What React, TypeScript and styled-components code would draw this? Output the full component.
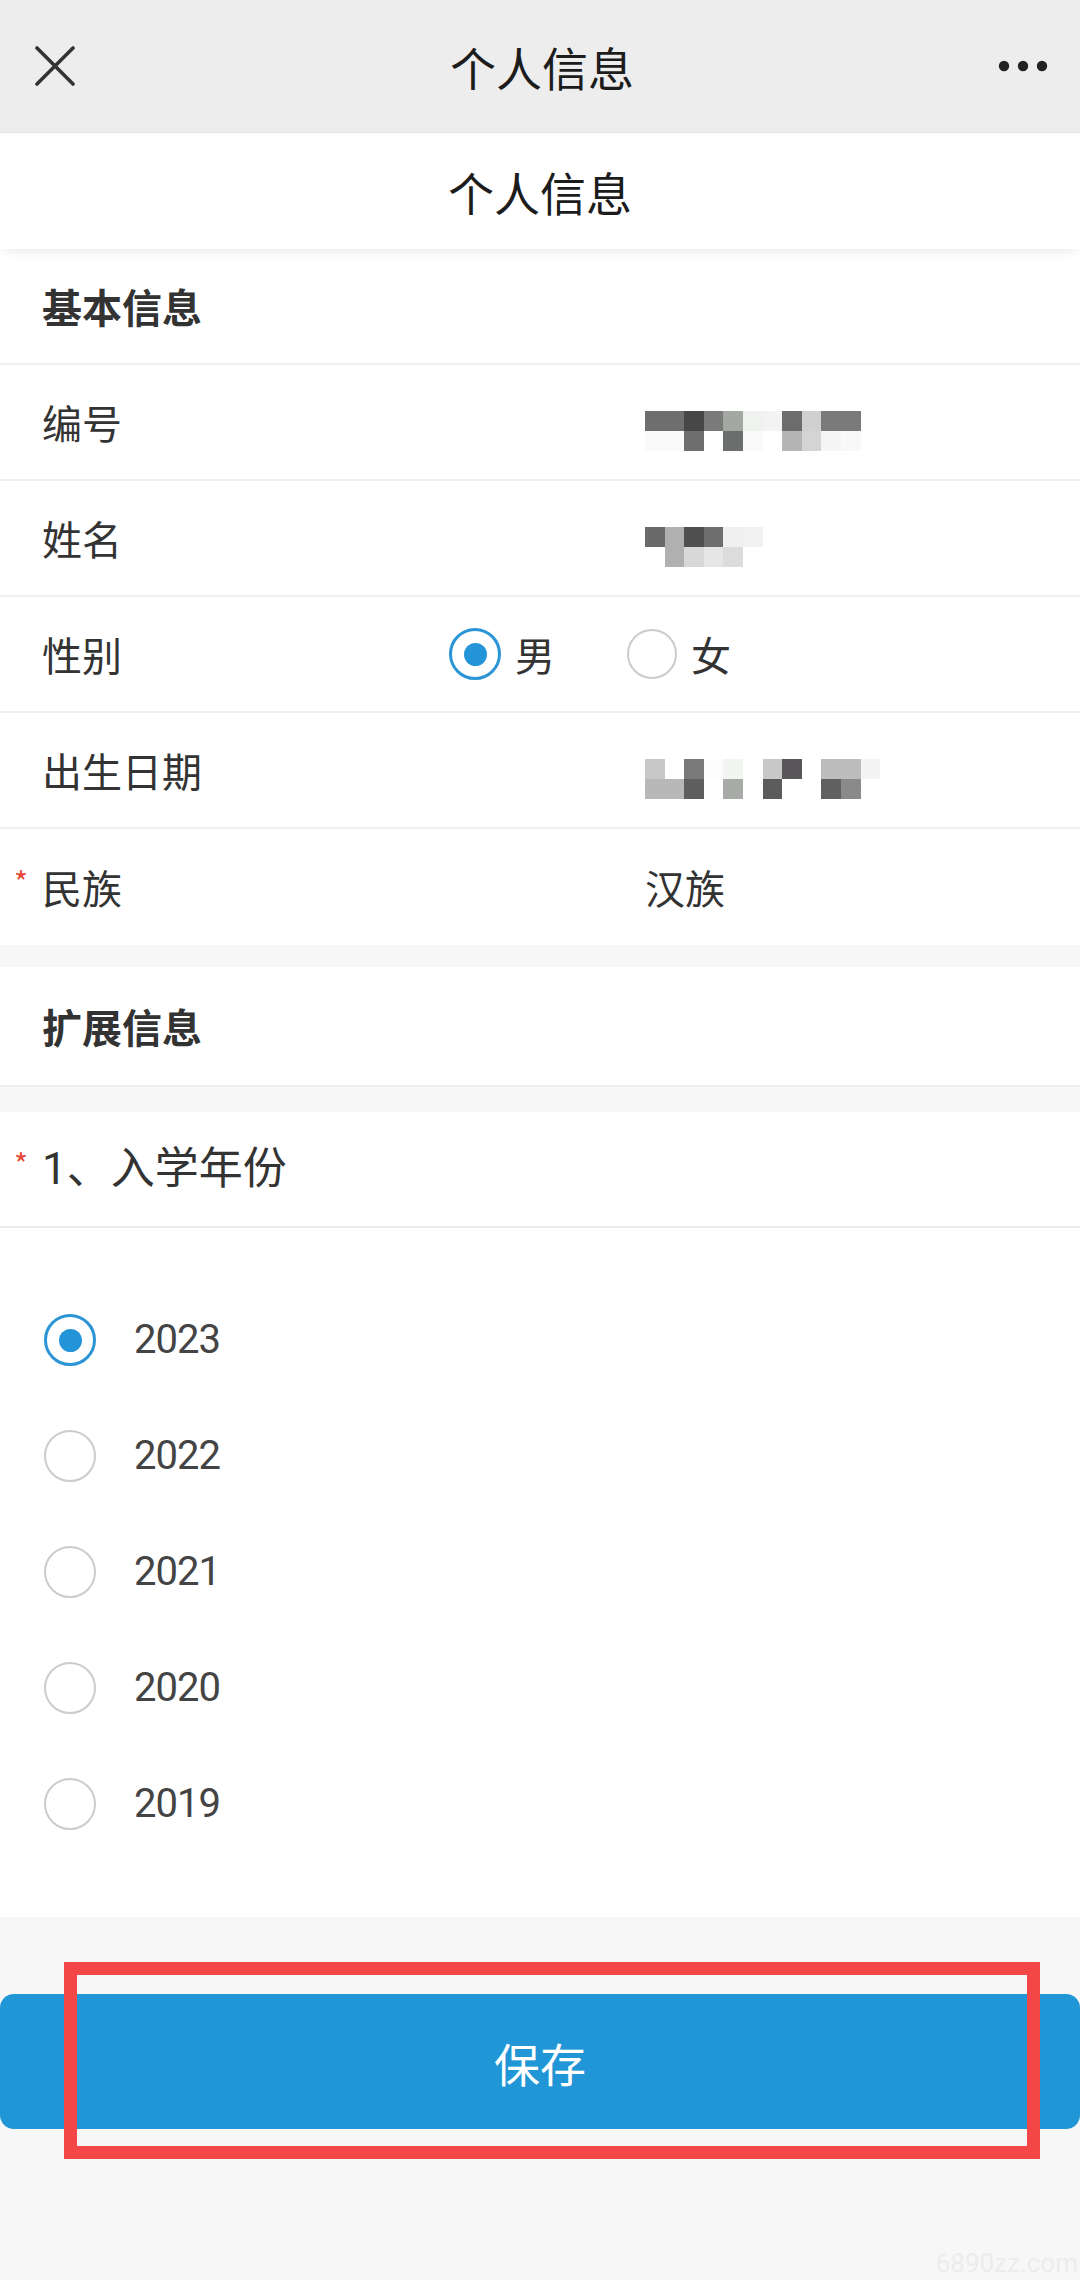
import React from "react";
import styled, { createGlobalStyle } from "styled-components";

const GlobalStyle = createGlobalStyle`
  html, body { margin: 0; padding: 0; background: #f7f7f7; }
  body { font-family: "Noto Sans CJK SC", "Noto Sans", sans-serif; }
  * { box-sizing: border-box; }
`;

const Page = styled.div`
  width: 1080px;
  height: 2280px;
  display: flex;
  flex-direction: column;
  background: #f7f7f7;
  overflow: hidden;
  position: relative;
`;

const NavBar = styled.div`
  height: 133px;
  flex-shrink: 0;
  background: #ededed;
  border-bottom: 1px solid #e2e2e2;
  display: grid;
  grid-template-columns: 1fr auto 1fr;
  align-items: center;
  padding: 0 31px 0 35px;
`;

const NavTitle = styled.div`
  font-size: 46px;
  font-weight: 400;
  color: #1c1c1c;
  line-height: 1;
`;

const NavIcon = styled.div<{ $end?: boolean }>`
  display: flex;
  justify-content: ${(p) => (p.$end ? "flex-end" : "flex-start")};
  align-items: center;
`;

const PageHeader = styled.div`
  height: 116px;
  flex-shrink: 0;
  background: #ffffff;
  display: flex;
  align-items: center;
  justify-content: center;
  font-size: 46px;
  font-weight: 400;
  color: #1c1c1c;
  position: relative;
  z-index: 1;
  box-shadow: 0 6px 10px -3px rgba(0, 0, 0, 0.08);
`;

const Card = styled.div<{ $gap?: number }>`
  background: #ffffff;
  flex-shrink: 0;
  margin-top: ${(p) => p.$gap ?? 0}px;
`;

const SectionHeader = styled.div<{ $h: number }>`
  height: ${(p) => p.$h}px;
  display: flex;
  align-items: center;
  padding-left: 42px;
  font-size: 40px;
  font-weight: 700;
  color: #333333;
  border-bottom: 2px solid #eeeeee;
`;

const Row = styled.div`
  height: 116px;
  display: flex;
  align-items: center;
  padding-left: 14px;
  border-bottom: 2px solid #f0f0f0;
  &:last-child {
    border-bottom: none;
  }
`;

const RequiredMark = styled.span<{ $show?: boolean }>`
  width: 28px;
  flex-shrink: 0;
  color: #e5493a;
  font-size: 30px;
  line-height: 1;
  align-self: center;
  margin-top: -12px;
  visibility: ${(p) => (p.$show ? "visible" : "hidden")};
`;

const Label = styled.div<{ $w: number }>`
  width: ${(p) => p.$w}px;
  flex-shrink: 0;
  font-size: 40px;
  color: #333333;
  line-height: 1;
`;

const Value = styled.div`
  font-size: 40px;
  color: #333333;
  line-height: 1;
`;

const Mosaic = styled.div<{ $cols: number }>`
  display: grid;
  grid-template-columns: repeat(${(p) => p.$cols}, 19.6px);
  grid-auto-rows: 19.6px;
  margin-top: 18px;
`;

const Cell = styled.span<{ $c: string }>`
  background: ${(p) => p.$c};
`;

const RadioGroup = styled.div`
  display: flex;
  align-items: center;
  gap: 72px;
`;

const RadioItem = styled.label`
  display: flex;
  align-items: center;
  gap: 14px;
  font-size: 40px;
  color: #333333;
  line-height: 1;
`;

const RadioCircle = styled.span<{ $checked?: boolean; $size: number }>`
  width: ${(p) => p.$size}px;
  height: ${(p) => p.$size}px;
  border-radius: 50%;
  flex-shrink: 0;
  border: ${(p) => (p.$checked ? "3px solid #2c95d6" : "2.5px solid #cccccc")};
  display: flex;
  align-items: center;
  justify-content: center;
  background: #ffffff;
`;

const RadioDot = styled.span`
  width: 23px;
  height: 23px;
  border-radius: 50%;
  background: #2494d8;
`;

const Question = styled.div`
  height: 116px;
  display: flex;
  align-items: center;
  padding-left: 14px;
  border-bottom: 2px solid #ebebeb;
`;

const QuestionText = styled.div`
  font-family: "Roboto", "Noto Sans CJK SC", sans-serif;
  font-size: 44px;
  color: #333333;
  line-height: 1;
`;

const OptionList = styled.div`
  padding: 54px 0 55px;
  display: flex;
  flex-direction: column;
`;

const OptionRow = styled.div`
  height: 116px;
  display: flex;
  align-items: center;
  gap: 38px;
  padding-left: 44px;
`;

const OptionText = styled.span`
  font-family: "Roboto", "Noto Sans", sans-serif;
  font-size: 40px;
  color: #444444;
  line-height: 1;
  letter-spacing: -1px;
`;

const Footer = styled.div`
  flex: 1;
  padding-top: 77px;
`;

const ButtonWrap = styled.div`
  position: relative;
`;

const SaveButton = styled.button`
  width: 100%;
  height: 135px;
  border: none;
  border-radius: 14px;
  background: #2196d6;
  color: #ffffff;
  font-family: "Noto Sans CJK SC", sans-serif;
  font-size: 46px;
  display: flex;
  align-items: center;
  justify-content: center;
  padding: 0;
`;

const Highlight = styled.div`
  position: absolute;
  top: -32px;
  left: 64px;
  width: 976px;
  height: 197px;
  border: 13px solid #f34646;
  pointer-events: none;
`;

const Watermark = styled.div`
  position: absolute;
  right: 2px;
  bottom: 2px;
  font-family: "Roboto", sans-serif;
  font-size: 26px;
  color: #ececec;
`;

const CloseIcon = () => (
  <svg width="40" height="40" viewBox="0 0 40 40">
    <path d="M2 2 L38 38 M38 2 L2 38" stroke="#333" strokeWidth="3.6" strokeLinecap="round" />
  </svg>
);

const MoreIcon = () => (
  <svg width="52" height="14" viewBox="0 0 52 14">
    <circle cx="7" cy="7" r="5.2" fill="#222" />
    <circle cx="26" cy="7" r="5.2" fill="#222" />
    <circle cx="45" cy="7" r="5.2" fill="#222" />
  </svg>
);

const BlurredValue = ({ rows }: { rows: string[][] }) => (
  <Mosaic $cols={rows[0].length}>
    {rows.flat().map((c, i) => (
      <Cell key={i} $c={c} />
    ))}
  </Mosaic>
);

const idMosaic = [
  ["#6e6e6e", "#6e6e6e", "#474747", "#7a7a7a", "#a3a8a3", "#f0f2f0", "#f3f3f3", "#6c6c6c", "#d0d0d0", "#7a7a7a", "#7a7a7a"],
  ["#fafafa", "#fafafa", "#6e6e6e", "#ffffff", "#6a6e6c", "#fafafa", "#ffffff", "#b4b4b4", "#d4d4d4", "#f5f5f5", "#f8f8f8"],
];

const nameMosaic = [
  ["#6a6a6a", "#b0b0b0", "#505050", "#6e6e6e", "#f0f0f0", "#f2f2f2"],
  ["#ffffff", "#b0b0b0", "#d8d8d8", "#e6e6e6", "#dcdcdc", "#ffffff"],
];

const birthMosaic = [
  ["#c8c8c8", "#ffffff", "#7a7a7a", "#fdfdfd", "#f3f5f3", "#ffffff", "#c8c8c8", "#5a575a", "#ffffff", "#bcbcbc", "#bcbcbc", "#f4f4f4"],
  ["#b8b8b8", "#b8b8b8", "#5e5e5e", "#ffffff", "#a8aaa8", "#ffffff", "#5c5c5c", "#ffffff", "#ffffff", "#606060", "#8a8a8a", "#ffffff"],
];

const years = ["2023", "2022", "2021", "2020", "2019"];

export default function App() {
  return (
    <>
      <GlobalStyle />
      <Page>
        <NavBar>
          <NavIcon>
            <CloseIcon />
          </NavIcon>
          <NavTitle>个人信息</NavTitle>
          <NavIcon $end>
            <MoreIcon />
          </NavIcon>
        </NavBar>
        <PageHeader>个人信息</PageHeader>

        <Card>
          <SectionHeader $h={116}>基本信息</SectionHeader>
          <Row>
            <RequiredMark />
            <Label $w={603}>编号</Label>
            <BlurredValue rows={idMosaic} />
          </Row>
          <Row>
            <RequiredMark />
            <Label $w={603}>姓名</Label>
            <BlurredValue rows={nameMosaic} />
          </Row>
          <Row>
            <RequiredMark />
            <Label $w={407}>性别</Label>
            <RadioGroup>
              <RadioItem>
                <RadioCircle $checked $size={52}>
                  <RadioDot />
                </RadioCircle>
                男
              </RadioItem>
              <RadioItem>
                <RadioCircle $size={50} />
                女
              </RadioItem>
            </RadioGroup>
          </Row>
          <Row>
            <RequiredMark />
            <Label $w={603}>出生日期</Label>
            <BlurredValue rows={birthMosaic} />
          </Row>
          <Row>
            <RequiredMark $show>*</RequiredMark>
            <Label $w={603}>民族</Label>
            <Value>汉族</Value>
          </Row>
        </Card>

        <Card $gap={22}>
          <SectionHeader $h={120}>扩展信息</SectionHeader>
        </Card>

        <Card $gap={25}>
          <Question>
            <RequiredMark $show>*</RequiredMark>
            <QuestionText>1、入学年份</QuestionText>
          </Question>
          <OptionList>
            {years.map((y, i) => (
              <OptionRow key={y}>
                <RadioCircle $checked={i === 0} $size={52}>
                  {i === 0 && <RadioDot />}
                </RadioCircle>
                <OptionText>{y}</OptionText>
              </OptionRow>
            ))}
          </OptionList>
        </Card>

        <Footer>
          <ButtonWrap>
            <SaveButton>保存</SaveButton>
            <Highlight />
          </ButtonWrap>
        </Footer>
        <Watermark>6890zz.com</Watermark>
      </Page>
    </>
  );
}
